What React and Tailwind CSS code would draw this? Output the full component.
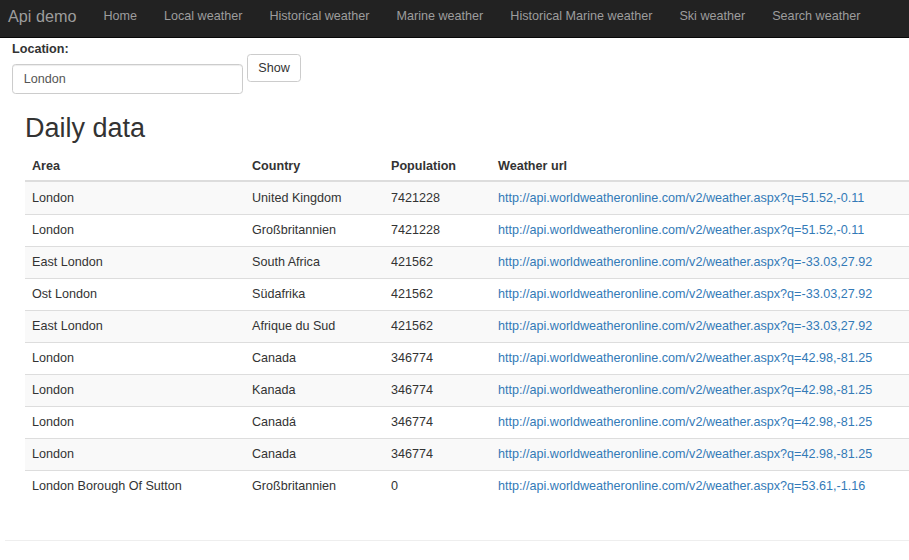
import React from "react";

const navLinks = [
  "Home",
  "Local weather",
  "Historical weather",
  "Marine weather",
  "Historical Marine weather",
  "Ski weather",
  "Search weather",
];

const rows = [
  ["London", "United Kingdom", "7421228", "http://api.worldweatheronline.com/v2/weather.aspx?q=51.52,-0.11"],
  ["London", "Großbritannien", "7421228", "http://api.worldweatheronline.com/v2/weather.aspx?q=51.52,-0.11"],
  ["East London", "South Africa", "421562", "http://api.worldweatheronline.com/v2/weather.aspx?q=-33.03,27.92"],
  ["Ost London", "Südafrika", "421562", "http://api.worldweatheronline.com/v2/weather.aspx?q=-33.03,27.92"],
  ["East London", "Afrique du Sud", "421562", "http://api.worldweatheronline.com/v2/weather.aspx?q=-33.03,27.92"],
  ["London", "Canada", "346774", "http://api.worldweatheronline.com/v2/weather.aspx?q=42.98,-81.25"],
  ["London", "Kanada", "346774", "http://api.worldweatheronline.com/v2/weather.aspx?q=42.98,-81.25"],
  ["London", "Canadá", "346774", "http://api.worldweatheronline.com/v2/weather.aspx?q=42.98,-81.25"],
  ["London", "Canada", "346774", "http://api.worldweatheronline.com/v2/weather.aspx?q=42.98,-81.25"],
  ["London Borough Of Sutton", "Großbritannien", "0", "http://api.worldweatheronline.com/v2/weather.aspx?q=53.61,-1.16"],
];

export default function App() {
  return (
    <div className="w-[909px] min-h-[560px] bg-white text-[#333] text-[12.6px] leading-[18px] font-['Liberation_Sans',Arial,sans-serif]">
      {/* Navbar */}
      <nav className="h-[38px] bg-[#222] border-b border-[#080808] flex items-start">
        <a className="pl-[8px] pr-[13.5px] pt-[7px] text-[16.2px] leading-[18px] text-[#9d9d9d]">Api demo</a>
        {navLinks.map((l) => (
          <a key={l} className="px-[13.5px] pt-[7px] leading-[18px] text-[#9d9d9d] whitespace-nowrap">
            {l}
          </a>
        ))}
      </nav>

      {/* Form */}
      <div className="pl-[12px] pt-[2px] flex items-start gap-[4px]">
        <div className="flex flex-col">
          <label className="font-bold leading-[18px] mb-[6px]">Location:</label>
          <div className="w-[231px] h-[30px] border border-[#ccc] rounded-[3.6px] shadow-[inset_0_1px_1px_rgba(0,0,0,0.075)] px-[10.8px] flex items-center text-[#555]">
            London
          </div>
        </div>
        <button className="mt-[14px] w-[54px] h-[28px] border border-[#ccc] rounded-[3.6px] bg-white text-[#333] leading-[18px] flex items-center justify-center">
          Show
        </button>
      </div>

      {/* Content */}
      <div className="pl-[25px]">
        <h2 className="mt-[19px] mb-[6px] text-[27px] leading-[30px] font-normal">Daily data</h2>
        <table className="w-full border-separate border-spacing-0 text-left">
          <colgroup>
            <col className="w-[220px]" />
            <col className="w-[139px]" />
            <col className="w-[107px]" />
            <col />
          </colgroup>
          <thead>
            <tr>
              {["Area", "Country", "Population", "Weather url"].map((h) => (
                <th key={h} className="px-[7px] pt-[8px] pb-[5px] font-bold border-b-2 border-[#ddd] whitespace-nowrap">
                  {h}
                </th>
              ))}
            </tr>
          </thead>
          <tbody>
            {rows.map((r, i) => {
              const bg = i % 2 === 0 ? "bg-[#f9f9f9]" : "bg-white";
              const cell =
                i === 0
                  ? "px-[7px] pt-[7px] pb-[7px] whitespace-nowrap"
                  : "px-[7px] pt-[6px] pb-[7px] border-t border-[#ddd] whitespace-nowrap";
              return (
                <tr key={i} className={bg}>
                  <td className={cell}>{r[0]}</td>
                  <td className={cell}>{r[1]}</td>
                  <td className={cell}>{r[2]}</td>
                  <td className={cell}>
                    <a className="text-[#337ab7]">{r[3]}</a>
                  </td>
                </tr>
              );
            })}
          </tbody>
        </table>
      </div>

      <div className="mt-[38px] ml-[5px] border-t border-[#eee]" />
    </div>
  );
}
